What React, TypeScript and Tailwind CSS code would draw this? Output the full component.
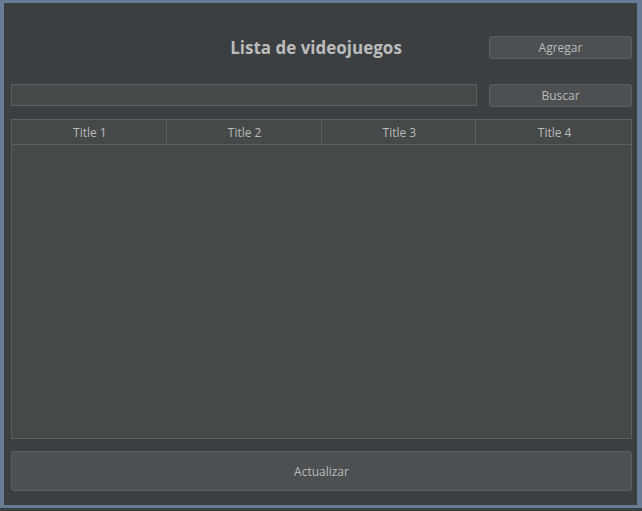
import React from 'react'

const titles = ['Title 1', 'Title 2', 'Title 3', 'Title 4']

const App: React.FC = () => {
  return (
    <div className="w-[642px] h-[511px] bg-[#3c3f41] pb-[3px] font-['Open_Sans','Noto_Sans',sans-serif] text-[12px] text-[#bbbbbb]">
      <div className="h-full border-l-[4px] border-t-[3px] border-r-[5px] border-b-[3px] border-[#687b94] bg-[#3c3f41] pl-[7px] pr-[5px] pt-[33px] flex flex-col">
        <div className="flex items-center gap-[12px] h-[23px]">
          <h1 className="flex-1 pl-[144px] text-center text-[17px] font-bold leading-none">
            Lista de videojuegos
          </h1>
          <button className="w-[143px] h-[23px] pt-[1px] rounded-[3px] border border-[#5e6060] bg-[#4c5052] leading-none">
            Agregar
          </button>
        </div>
        <div className="flex items-start gap-[12px] mt-[25px]">
          <input className="flex-1 h-[22px] border border-[#5e6060] bg-[#45494a] outline-none px-1" />
          <button className="w-[143px] h-[23px] pt-[1px] rounded-[3px] border border-[#5e6060] bg-[#4c5052] leading-none">
            Buscar
          </button>
        </div>
        <div className="mt-[12px] h-[320px] border border-[#5e6060] bg-[#45494a] flex flex-col">
          <div className="grid grid-cols-4 h-[25px] border-b border-[#5e6060]">
            {titles.map((t, i) => (
              <div
                key={t}
                className={`flex items-center justify-center pt-[2px] pl-[2px] ${i < 3 ? 'border-r border-[#5e6060]' : ''}`}
              >
                {t}
              </div>
            ))}
          </div>
        </div>
        <button className="mt-[12px] h-[40px] pt-[1px] rounded-[3px] border border-[#5e6060] bg-[#4c5052]">
          Actualizar
        </button>
      </div>
    </div>
  )
}

export default App
